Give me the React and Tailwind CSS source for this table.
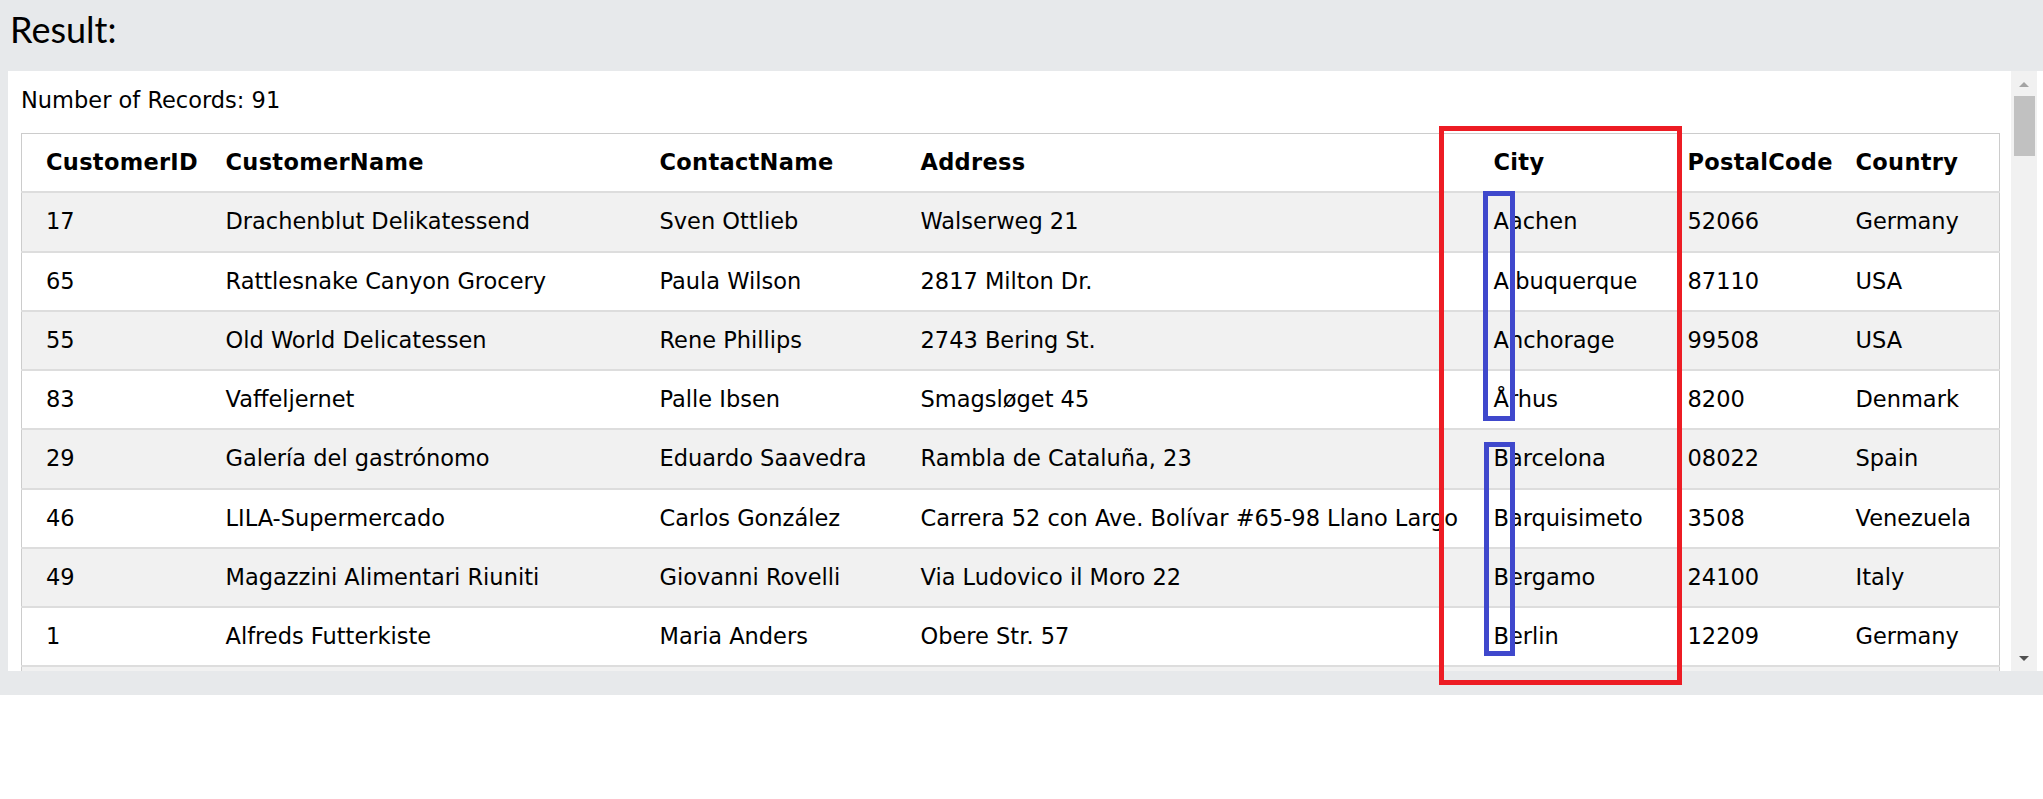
import React from 'react';

const rows = [
  ['17', 'Drachenblut Delikatessend', 'Sven Ottlieb', 'Walserweg 21', 'Aachen', '52066', 'Germany'],
  ['65', 'Rattlesnake Canyon Grocery', 'Paula Wilson', '2817 Milton Dr.', 'Albuquerque', '87110', 'USA'],
  ['55', 'Old World Delicatessen', 'Rene Phillips', '2743 Bering St.', 'Anchorage', '99508', 'USA'],
  ['83', 'Vaffeljernet', 'Palle Ibsen', 'Smagsløget 45', 'Århus', '8200', 'Denmark'],
  ['29', 'Galería del gastrónomo', 'Eduardo Saavedra', 'Rambla de Cataluña, 23', 'Barcelona', '08022', 'Spain'],
  ['46', 'LILA-Supermercado', 'Carlos González', 'Carrera 52 con Ave. Bolívar #65-98 Llano Largo', 'Barquisimeto', '3508', 'Venezuela'],
  ['49', 'Magazzini Alimentari Riuniti', 'Giovanni Rovelli', 'Via Ludovico il Moro 22', 'Bergamo', '24100', 'Italy'],
  ['1', 'Alfreds Futterkiste', 'Maria Anders', 'Obere Str. 57', 'Berlin', '12209', 'Germany'],
  // next row only peeks in under the fold, text hidden
  ['', '', '', '', '', '', ''],
];

const headers = ['CustomerID', 'CustomerName', 'ContactName', 'Address', 'City', 'PostalCode', 'Country'];

function Scrollbar() {
  return (
    <div className="w-[32px] flex shrink-0">
      <div className="w-[26px] bg-[#f1f1f1] flex flex-col items-center">
        <div className="h-[11px]" />
        <div className="w-0 h-0 border-l-[5.5px] border-r-[5.5px] border-b-[5px] border-l-transparent border-r-transparent border-b-[#a3a3a3]" />
        <div className="h-[9px]" />
        <div className="w-[21px] h-[60px] bg-[#c1c1c1]" />
        <div className="flex-1" />
        <div className="w-0 h-0 border-l-[5.5px] border-r-[5.5px] border-t-[5px] border-l-transparent border-r-transparent border-t-[#505050]" />
        <div className="h-[10px]" />
      </div>
      <div className="flex-1 bg-white" />
    </div>
  );
}

export default function App() {
  return (
    <div className="relative w-[2043px] h-[799px] bg-white overflow-hidden">
      <div className="bg-[#e7e9eb] pb-[24px]">
        <div className="h-[71px] pl-[10px] pt-[7px] font-['Lato',sans-serif] text-[36px] leading-[44px] text-black">
          Result:
        </div>
        <div className="ml-[8px] h-[600px] bg-white flex">
          <div className="flex-1 overflow-hidden pl-[13px] pt-[12px] font-['DejaVu_Sans',Verdana,sans-serif] text-[22.5px] text-black">
            <div className="leading-[34px] mb-[16px]">Number of Records: 91</div>
            <table className="table-fixed border-collapse w-[1978px] border-[1.5px] border-[#cccccc]">
              <colgroup>
                <col className="w-[192px]" />
                <col className="w-[434px]" />
                <col className="w-[261px]" />
                <col className="w-[573px]" />
                <col className="w-[194px]" />
                <col className="w-[168px]" />
                <col className="w-[156px]" />
              </colgroup>
              <thead>
                <tr className="bg-white border-b-2 border-[#dddddd]">
                  {headers.map((h, i) => (
                    <th
                      key={h}
                      className={`text-left font-bold tracking-[0.3px] py-[12px] leading-[33.25px] whitespace-nowrap ${i === 0 ? 'pl-[24px] pr-[12px]' : 'px-[12px]'}`}
                    >
                      {h}
                    </th>
                  ))}
                </tr>
              </thead>
              <tbody>
                {rows.map((r, ri) => (
                  <tr key={ri} className={`border-b-2 border-[#dddddd] ${ri % 2 === 0 ? 'bg-[#f1f1f1]' : 'bg-white'}`}>
                    {r.map((c, i) => (
                      <td
                        key={i}
                        className={`py-[12px] h-[59.25px] leading-[33.25px] whitespace-nowrap ${i === 0 ? 'pl-[24px] pr-[12px]' : 'px-[12px]'}`}
                      >
                        {c}
                      </td>
                    ))}
                  </tr>
                ))}
              </tbody>
            </table>
          </div>
          <Scrollbar />
        </div>
      </div>

      {/* annotation boxes drawn over the table */}
      <div className="absolute left-[1439px] top-[126px] w-[243px] h-[559px] border-[5px] border-[#ed1c24]" />
      <div className="absolute left-[1483px] top-[191px] w-[32px] h-[230px] border-[5px] border-[#3f48cc]" />
      <div className="absolute left-[1484px] top-[442px] w-[31px] h-[214px] border-[5px] border-[#3f48cc]" />
    </div>
  );
}
